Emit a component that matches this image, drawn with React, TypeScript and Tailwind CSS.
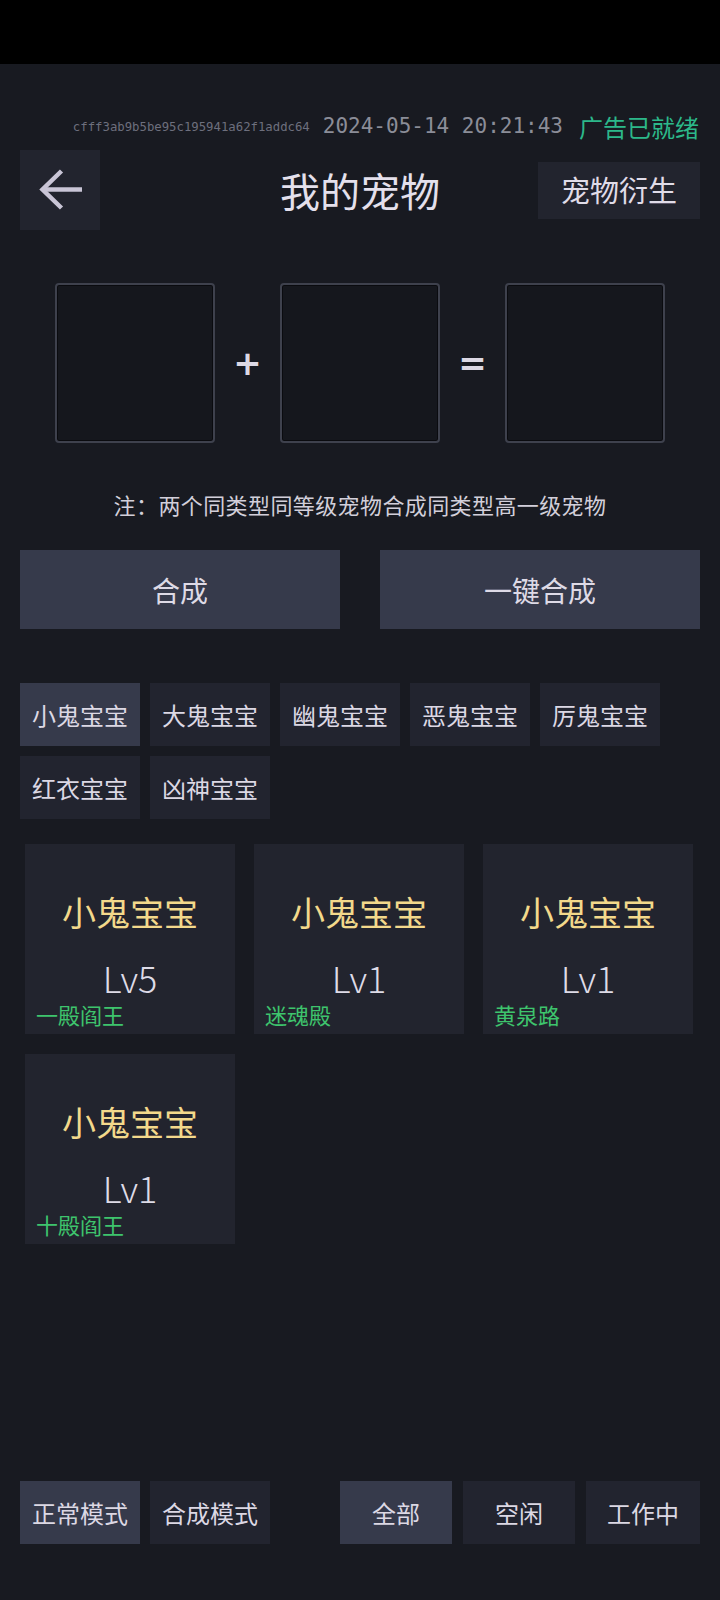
import React from "react";

const CJK = '"Noto Sans CJK SC", "Noto Sans", sans-serif';
const MONO = '"DejaVu Sans Mono", "Liberation Mono", monospace';

function Tab({ label, active, w = "w-[120px]" }: { label: string; active?: boolean; w?: string }) {
  return (
    <div
      className={`${w} h-[63px] flex items-center justify-center text-[24px] text-[#dcd8e4] ${
        active ? "bg-[#363a4b]" : "bg-[#22242f]"
      }`}
    >
      {label}
    </div>
  );
}

function PetCard({ name, lv, place }: { name: string; lv: string; place: string }) {
  return (
    <div className="h-[190px] bg-[#22242e] flex flex-col">
      <div className="pt-[48px] h-[88px] leading-[40px] text-center text-[34px] text-[#f3d98b]">{name}</div>
      <div className="mt-[25px] h-[40px] leading-[40px] text-center text-[36px] text-[#dedbe7] font-light">{lv}</div>
      <div className="mt-[4px] h-[26px] leading-[26px] px-[11px] text-[22px] text-[#3ec46d]">{place}</div>
    </div>
  );
}

function SlotBox() {
  return (
    <div className="w-[160px] h-[160px] rounded-[4px] border-[2px] border-[#3e414d] bg-[#15171d] shadow-[inset_0_0_0_1px_#0a0b0f]" />
  );
}

export default function App() {
  return (
    <div className="w-[720px] h-[1600px] bg-[#181a21] flex flex-col overflow-hidden" style={{ fontFamily: CJK }}>
      <div className="h-[64px] bg-black shrink-0" />

      {/* info row */}
      <div className="mt-[43px] h-[40px] flex items-center justify-end pr-[21px] gap-[13px]">
        <span className="text-[12.3px] text-[#6d6f7d]" style={{ fontFamily: MONO }}>
          cfff3ab9b5be95c195941a62f1addc64
        </span>
        <span className="text-[21px] text-[#8b8d98]" style={{ fontFamily: MONO }}>
          2024-05-14 20:21:43
        </span>
        <span className="ml-[3px] text-[24px] text-[#2cb88a]">广告已就绪</span>
      </div>

      {/* header */}
      <div className="mt-[3px] h-[80px] px-[20px] grid grid-cols-[1fr_auto_1fr] items-center">
        <div className="justify-self-start w-[80px] h-[80px] bg-[#22242e] flex items-center justify-center">
          <svg width="80" height="80" viewBox="0 0 80 80" fill="none">
            <path d="M62 39.5 H23" stroke="#c9c5d6" strokeWidth="4.5" />
            <path d="M41.5 21 L22.5 39.5 L41.5 58" stroke="#c9c5d6" strokeWidth="4.5" strokeLinejoin="miter" />
          </svg>
        </div>
        <div className="text-[40px] leading-[80px] text-[#e4e0ec] text-center">我的宠物</div>
        <div className="justify-self-end w-[162px] h-[57px] bg-[#22242e] flex items-center justify-center text-[29px] text-[#e0dce8]">
          宠物衍生
        </div>
      </div>

      {/* synthesis boxes */}
      <div className="mt-[53px] h-[160px] flex items-center pl-[55px]">
        <SlotBox />
        <div className="w-[65px] flex items-center justify-center text-[34px] font-bold text-[#dcd8e4]" style={{ fontFamily: '"DejaVu Sans", sans-serif' }}>
          +
        </div>
        <SlotBox />
        <div className="w-[65px] flex items-center justify-center text-[34px] font-bold text-[#dcd8e4]" style={{ fontFamily: '"DejaVu Sans", sans-serif' }}>
          =
        </div>
        <SlotBox />
      </div>

      {/* note */}
      <div className="mt-[46px] h-[30px] leading-[30px] text-center text-[22px] tracking-[0.4px] text-[#d2cfda]">
        注：两个同类型同等级宠物合成同类型高一级宠物
      </div>

      {/* action buttons */}
      <div className="mt-[31px] px-[20px] flex gap-[40px]">
        <div className="flex-1 h-[79px] bg-[#363a4b] flex items-center justify-center text-[28px] text-[#dedae6]">合成</div>
        <div className="flex-1 h-[79px] bg-[#363a4b] flex items-center justify-center text-[28px] text-[#dedae6]">一键合成</div>
      </div>

      {/* type tabs */}
      <div className="mt-[54px] px-[20px] flex flex-wrap gap-x-[10px] gap-y-[10px] w-[720px]">
        <Tab label="小鬼宝宝" active />
        <Tab label="大鬼宝宝" />
        <Tab label="幽鬼宝宝" />
        <Tab label="恶鬼宝宝" />
        <Tab label="厉鬼宝宝" />
        <Tab label="红衣宝宝" />
        <Tab label="凶神宝宝" />
      </div>

      {/* pet cards */}
      <div className="mt-[25px] px-[25px] grid grid-cols-[210px_210px_210px] gap-x-[19px] gap-y-[20px]">
        <PetCard name="小鬼宝宝" lv="Lv5" place="一殿阎王" />
        <PetCard name="小鬼宝宝" lv="Lv1" place="迷魂殿" />
        <PetCard name="小鬼宝宝" lv="Lv1" place="黄泉路" />
        <PetCard name="小鬼宝宝" lv="Lv1" place="十殿阎王" />
      </div>

      {/* bottom bar */}
      <div className="mt-auto mb-[56px] px-[20px] flex items-center justify-between">
        <div className="flex gap-[10px]">
          <Tab label="正常模式" active />
          <Tab label="合成模式" />
        </div>
        <div className="flex gap-[11px]">
          <Tab label="全部" active w="w-[112px]" />
          <Tab label="空闲" w="w-[112px]" />
          <Tab label="工作中" w="w-[114px]" />
        </div>
      </div>
    </div>
  );
}
